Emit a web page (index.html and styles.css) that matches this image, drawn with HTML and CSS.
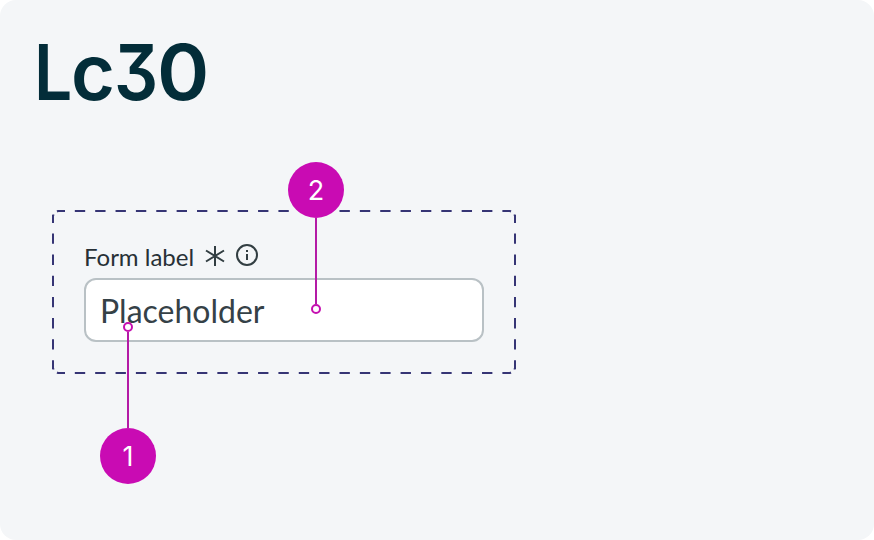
FILE: index.html
```
<!DOCTYPE html>
<html lang="en">
<head>
    <meta charset="UTF-8">
    <title>Lc30</title>
    <link rel="stylesheet" href="styles.css">
</head>
<body>
    <div class="card">
        <h1 class="title"><span class="l">L</span><span class="c">c</span><span class="three">3</span><span class="zero">0</span></h1>
        <div class="frame">
            <svg class="dashes" width="464" height="164" viewBox="0 0 464 164">
                <path d="M6 1H458M6 163H458" stroke-dasharray="10.36 10" stroke-dashoffset="-16.82"/>
                <path d="M1 5V159M463 5V159" stroke-dasharray="10.4 10.76" stroke-dashoffset="-18.4"/>
                <path d="M13 1H6L5 1.5M451 1H458L459 1.5M13 163H6L5 162.5M451 163H458L459 162.5"/>
                <path d="M1 13V6L1.6 4.5M463 13V6L462.4 4.5M1 151V158L1.6 159.5M463 151V158L462.4 159.5"/>
            </svg>
            <div class="label">
                <span class="text">Form label</span>
                <svg class="star" width="20" height="22" viewBox="0 0 20 22">
                    <path d="M10 1V21M1 5.5L19 16.5M19 5.5L1 16.5"/>
                </svg>
                <svg class="info" width="22" height="22" viewBox="0 0 22 22">
                    <circle cx="11" cy="11" r="10"/>
                    <path d="M11 10V16M11 6V8"/>
                </svg>
            </div>
            <div class="field">Placeholder</div>
            <div class="mark mark2"><span class="num">2</span><span class="line"></span><span class="dot"></span></div>
            <div class="mark mark1"><span class="dot"></span><span class="line"></span><span class="num">1</span></div>
        </div>
    </div>
</body>
</html>
```

FILE: styles.css
```
body,div,h1,span{margin: 0; padding: 0;}
body{background-color: #fff;}
svg{display: block; fill: none;}
.card{box-sizing: border-box; width: 874px; height: 540px; padding: 26px 34px; border-radius: 16px; background-color: #f4f6f8; overflow: hidden;}
.title{display: flex; height: 92px; line-height: 92px; font-family: Inter, sans-serif; font-size: 77px; font-weight: 560; color: #032d39; font-feature-settings: "cv09";}
.title span{transform-origin: 0 50%;}
.title .l{width: 37px; transform: scaleX(0.88);}
.title .c{width: 43px; transform: scaleX(0.98);}
.title .three{width: 43px; transform: scaleX(0.9);}
.title .zero{transform: scaleX(1.03);}
/* annotated form field */
.frame{position: relative; box-sizing: border-box; width: 464px; height: 164px; margin: 92px 0 0 18px; padding: 32px;}
.dashes{position: absolute; left: 0; top: 0; stroke: #363575; stroke-width: 2;}
.label{display: flex; height: 36px; font-family: Lato, sans-serif; font-size: 24px; line-height: 30px; color: #273036;}
.label .text{width: 121px; white-space: nowrap;}
.star{margin-top: 3px; stroke: #323e42; stroke-width: 2;}
.info{margin: 2px 0 0 11px; stroke: #323e42; stroke-width: 2;}
.field{box-sizing: border-box; width: 400px; height: 64px; padding-left: 14px; border: 2px solid #b9c1c5; border-radius: 12px; background-color: #fff; font-family: Lato, sans-serif; font-size: 32px; line-height: 62px; color: #354147;}
/* numbered pointers */
.mark{position: absolute; display: flex; flex-direction: column; align-items: center; width: 56px;}
.mark1{left: 48px; top: 112px;}
.mark2{left: 236px; top: -48px;}
.num{width: 56px; height: 56px; border-radius: 50%; background-color: #c90bb3; color: #fff; font-family: Inter, sans-serif; font-size: 27px; line-height: 58px; text-align: center;}
.line{width: 2px; background-color: #b41aa6;}
.mark1 .line{height: 96px;}
.mark2 .line{height: 86px;}
.dot{box-sizing: border-box; width: 10px; height: 10px; border: 2px solid #c510b0; border-radius: 50%; background-color: #fff;}
```
